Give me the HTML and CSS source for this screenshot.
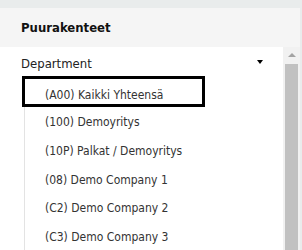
FILE: index.html
```html
<!DOCTYPE html>
<html lang="fi">
<head>
  <meta charset="UTF-8">
  <title>Puurakenteet</title>
  <link rel="stylesheet" href="styles.css">
</head>
<body>
  <div class="panel">
    <div class="panel-head">Puurakenteet</div>
    <div class="panel-body">
      <div class="content">
        <div class="field">
          <span class="field-label">Department</span>
          <span class="caret"></span>
        </div>
        <div class="option selected">(A00) Kaikki Yhteensä</div>
        <ul class="options">
          <li>(100) Demoyritys</li>
          <li>(10P) Palkat / Demoyritys</li>
          <li>(08) Demo Company 1</li>
          <li>(C2) Demo Company 2</li>
          <li>(C3) Demo Company 3</li>
        </ul>
      </div>
      <div class="scrollbar">
        <div class="scroll-up"><span class="arrow-up"></span></div>
        <div class="scroll-thumb"></div>
      </div>
    </div>
  </div>
</body>
</html>
```

FILE: styles.css
```css
body {
  margin: 0;
  height: 250px;
  overflow: hidden;
  background: #e9ecec;
  font-family: "DejaVu Sans", Verdana, sans-serif;
  font-stretch: condensed;
  color: #333;
}
.panel {
  margin-top: 8px;
  width: 300px;
}
.panel-head {
  height: 39px;
  line-height: 39px;
  padding-left: 21px;
  background: #f5f5f5;
  font-weight: bold;
  font-size: 13px;
  color: #111;
}
.panel-body {
  display: flex;
  height: 203px;
  background: #fff;
}
.content {
  flex: 1;
  padding-top: 3px;
}
.field {
  display: flex;
  align-items: center;
  justify-content: space-between;
  height: 26px;
  padding: 0 20px 0 21px;
  font-size: 13px;
  color: #222;
}
.caret {
  width: 0;
  height: 0;
  border-left: 3.5px solid transparent;
  border-right: 3.5px solid transparent;
  border-top: 4px solid #000;
  margin-top: -2px;
}
.option.selected {
  box-sizing: border-box;
  margin-left: 22px;
  width: 183px;
  height: 31px;
  border: 3px solid #000;
  padding: 8.7px 0 0 20px;
  line-height: 14px;
  font-size: 12px;
}
.options {
  list-style: none;
  margin: 0 0 0 24px;
  padding: 1.4px 0 0;
  border-left: 1px solid #e3e3e3;
  font-size: 12px;
}
.options li {
  height: 28.66px;
  line-height: 28.66px;
  padding-left: 20px;
}
.scrollbar {
  display: flex;
  flex-direction: column;
  width: 17px;
  background: #f1f1f1;
}
.scroll-up {
  height: 17px;
  display: flex;
  align-items: center;
  justify-content: center;
}
.arrow-up {
  width: 0;
  height: 0;
  border-left: 4px solid transparent;
  border-right: 4px solid transparent;
  border-bottom: 4px solid #a3a3a3;
  margin-bottom: 1px;
}
.scroll-thumb {
  flex: 1;
  margin: 0 2px;
  background: #c1c1c1;
}
```
